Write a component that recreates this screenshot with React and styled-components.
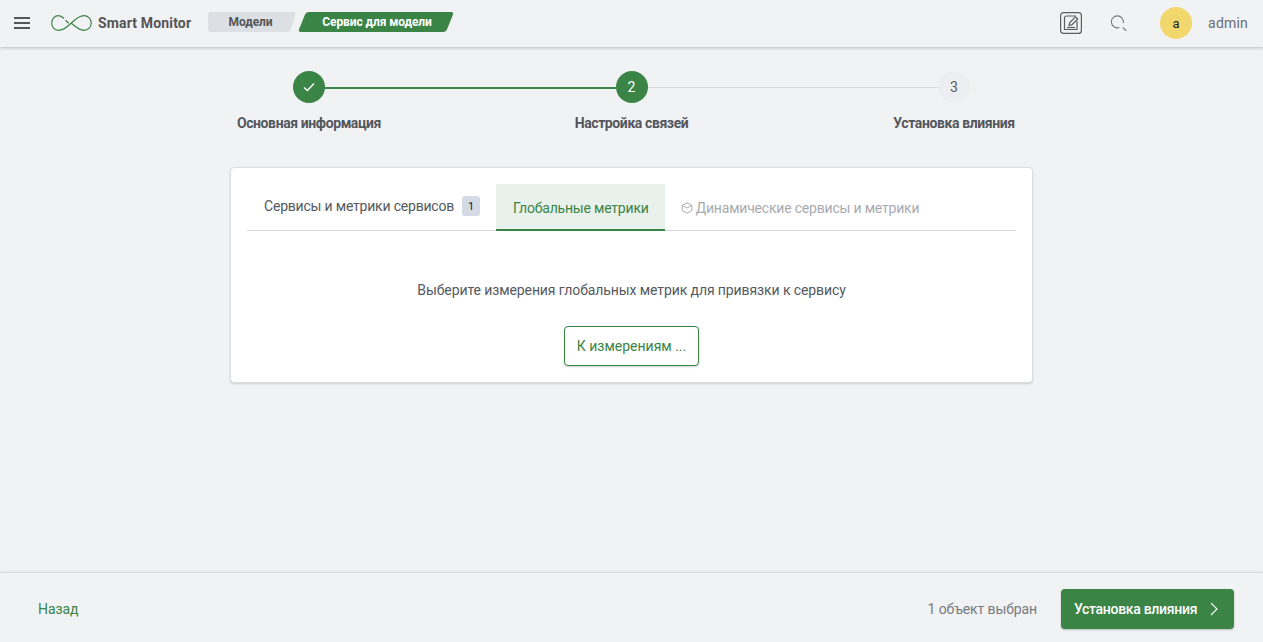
import React from "react";
import styled, { createGlobalStyle } from "styled-components";

const green = "#3a8445";
const FONT = `"Roboto", "Liberation Sans", sans-serif`;

const Global = createGlobalStyle`
  html, body {
    margin: 0;
    height: 100%;
    background: #f1f2f4;
    font-family: ${FONT};
    font-size: 14px;
  }
  * { box-sizing: border-box; }
`;

const Page = styled.div`
  height: 642px;
  display: flex;
  flex-direction: column;
  overflow: hidden;
`;

const Header = styled.header`
  height: 47px;
  flex: none;
  display: flex;
  align-items: center;
  padding: 0 15px 1px 14px;
  background: #f1f2f4;
  box-shadow: 0 1px 3px rgba(60, 64, 75, 0.3);
`;

const Burger = styled.div`
  width: 16px;
  height: 12px;
  margin-right: 21px;
  border-top: 2px solid #555;
  border-bottom: 2px solid #555;
  position: relative;

  &::after {
    content: "";
    position: absolute;
    left: 0;
    right: 0;
    top: 3px;
    height: 2px;
    background: #555;
  }
`;

const Brand = styled.div`
  margin: 0 17px 0 6px;
  width: 93px;
  white-space: nowrap;
  font-size: 14px;
  font-weight: 700;
  letter-spacing: 0.15px;
  color: #555;
`;

const Crumb = styled.div`
  position: relative;
  z-index: 0;
  height: 20px;
  display: flex;
  align-items: center;
  justify-content: center;
  margin-top: -2px;
  padding: ${(p) => (p.$active ? "0 0 0 2px" : "0 3px 0 0")};
  width: ${(p) => p.$width}px;
  font-size: 12px;
  font-weight: 700;
  letter-spacing: -0.1px;
  color: ${(p) => (p.$active ? "#fff" : "#555")};

  &::before {
    content: "";
    position: absolute;
    z-index: -1;
    inset: 0;
    left: ${(p) => (p.$active ? "4px" : "10px")};
    right: ${(p) => (p.$active ? "4px" : "3px")};
    border-radius: 3px;
    background: ${(p) => (p.$active ? green : "#dcdfe4")};
    transform: skewX(${(p) => (p.$active ? "-22deg" : "-17deg")});
  }

  &::after {
    content: "";
    display: ${(p) => (p.$active ? "none" : "block")};
    position: absolute;
    z-index: -1;
    top: 0;
    bottom: 0;
    left: 0;
    width: 20px;
    border-radius: 3px;
    background: #dcdfe4;
  }
`;

const CrumbGap = styled.div`
  width: 2px;
`;

const Spacer = styled.div`
  flex: 1;
`;

const ToolIcon = styled.svg`
  display: block;
  flex: none;
  margin-right: ${(p) => p.$gap}px;
`;

const Avatar = styled.div`
  width: 32px;
  height: 32px;
  border-radius: 50%;
  background: #f2d76d;
  color: #222;
  font-size: 13px;
  display: flex;
  align-items: center;
  justify-content: center;
  margin-right: 16px;
`;

const UserName = styled.div`
  font-size: 14px;
  letter-spacing: 0.2px;
  color: #6a6d73;
`;

const Main = styled.main`
  flex: 1;
  display: flex;
  flex-direction: column;
  align-items: center;
  padding-top: 24px;
`;

const Stepper = styled.div`
  width: 677px;
  display: grid;
  grid-template-columns: 32px 1fr 32px 1fr 32px;
  grid-template-rows: 32px auto;
  align-items: center;
`;

const Circle = styled.div`
  width: 32px;
  height: 32px;
  border-radius: 50%;
  display: flex;
  align-items: center;
  justify-content: center;
  font-size: 14px;
  background: ${(p) => (p.$on ? green : "#eceef1")};
  color: ${(p) => (p.$on ? "#fff" : "#555b66")};
`;

const Line = styled.div`
  height: ${(p) => (p.$on ? 2 : 1)}px;
  margin-top: ${(p) => (p.$on ? 2 : 0)}px;
  background: ${(p) => (p.$on ? green : "#d6d8dc")};
`;

const StepLabel = styled.div`
  grid-row: 2;
  grid-column: ${(p) => p.$col};
  justify-self: center;
  margin-top: 11px;
  white-space: nowrap;
  font-size: 14px;
  line-height: 18px;
  font-weight: 700;
  letter-spacing: -0.4px;
  color: #53565c;
`;

const Card = styled.section`
  width: 803px;
  height: 216px;
  margin-top: 35px;
  padding: 16px 16px 0;
  background: #fff;
  border: 1px solid #dcdee2;
  border-radius: 4px;
  box-shadow: 0 1px 2px rgba(60, 64, 75, 0.2);
  display: flex;
  flex-direction: column;
  align-items: center;
`;

const Tabs = styled.div`
  align-self: stretch;
  height: 47px;
  display: flex;
  border-bottom: 1px solid #d6d8dc;
`;

const Tab = styled.div`
  height: 47px;
  display: flex;
  align-items: center;
  gap: ${(p) => (p.$gap ? p.$gap : 0)}px;
  padding: ${(p) => (p.$active ? 3 : p.$disabled ? 1 : 0)}px 16px
    ${(p) => (p.$active || p.$disabled ? 0 : 3)}px ${(p) => (p.$disabled ? 16 : 17)}px;
  font-size: 14px;
  letter-spacing: -0.2px;
  color: ${(p) => (p.$active ? green : p.$disabled ? "#a9abaf" : "#555960")};
  background: ${(p) => (p.$active ? "#e9f1ec" : "transparent")};
  border-bottom: ${(p) => (p.$active ? `2px solid ${green}` : "none")};
`;

const Count = styled.span`
  width: 18px;
  height: 20px;
  border-radius: 3px;
  background: #d5dbe5;
  color: #222;
  font-size: 11px;
  display: flex;
  align-items: center;
  justify-content: center;
`;

const Hint = styled.p`
  margin: 50px 0 0;
  font-size: 14px;
  line-height: 18px;
  letter-spacing: -0.1px;
  color: #555960;
`;

const GhostButton = styled.button`
  width: 135px;
  height: 40px;
  margin-top: 27px;
  padding: 0;
  font: inherit;
  font-size: 14px;
  color: ${green};
  background: #fff;
  border: 1px solid ${green};
  border-radius: 4px;
  box-shadow: 0 1px 2px rgba(60, 64, 75, 0.25);
`;

const Footer = styled.footer`
  height: 70px;
  flex: none;
  display: flex;
  align-items: center;
  padding: 3px 29px 0 38px;
  border-top: 1px solid #d9dbdf;
  box-shadow: 0 -1px 2px rgba(60, 64, 75, 0.06);
`;

const BackLink = styled.a`
  font-size: 14px;
  letter-spacing: -0.1px;
  color: ${green};
`;

const Selected = styled.div`
  margin-right: 24px;
  font-size: 14px;
  letter-spacing: -0.1px;
  color: #777a80;
`;

const NextButton = styled.button`
  width: 173px;
  height: 40px;
  display: flex;
  align-items: center;
  justify-content: space-between;
  padding: 0 16px 0 13px;
  font: inherit;
  font-size: 14px;
  font-weight: 500;
  letter-spacing: -0.3px;
  color: #fff;
  background: ${green};
  border: none;
  border-radius: 4px;
  box-shadow: 0 1px 2px rgba(60, 64, 75, 0.3);
`;

function Logo() {
  return (
    <svg width="41" height="16" viewBox="0 0 41 16" fill="none" stroke={green} strokeWidth="1.2">
      <path d="M13 3.500C11.500 2 10 .7 7.500 .7 3.500 .7 .7 4 .7 8s2.800 7.300 6.800 7.300C13 15.300 17 11 20 8.300c4-3.800 8-7.600 13-7.600 4 0 7.300 3.300 7.300 7.300s-3.300 7.300-7.300 7.300c-5 0-9-4-12.500-7" />
      <path d="M14.500 5.200l3.300 3" />
    </svg>
  );
}

function EditIcon() {
  return (
    <ToolIcon $gap={29} width="22" height="22" viewBox="0 0 22 22" fill="none" stroke="#5b5e63" strokeWidth="1.2">
      <rect x="0.6" y="0.6" width="20.8" height="20.8" rx="3" />
      <path d="M16 4H6.500A2 2 0 0 0 4.500 6v11.500H17V9" />
      <path d="M9 13.500l.8-3L15.500 4.800 17.700 7 12 12.700z" />
      <path d="M7 15.500h8" />
    </ToolIcon>
  );
}

function SearchIcon() {
  return (
    <ToolIcon $gap={33} width="16" height="16" viewBox="0 0 16 16" fill="none" stroke="#77797e" strokeWidth="1.1">
      <path d="M8.500 12.500A6 6 0 1 1 12.300 8" />
      <path d="M11.800 12.500l3.500 3.300" />
    </ToolIcon>
  );
}

function CubeIcon() {
  return (
    <svg width="12" height="12" viewBox="0 0 12 12" fill="none" stroke="#a9abaf" strokeWidth="1">
      <path d="M6 .8l4.800 2.600v5.200L6 11.200 1.200 8.600V3.400z" />
      <path d="M1.200 3.400L6 6l4.800-2.600" />
    </svg>
  );
}

function Check() {
  return (
    <svg width="14" height="14" viewBox="0 0 14 14" fill="none" stroke="#fff" strokeWidth="1.4">
      <path d="M2 7.500l3.500 3L12 3.500" />
    </svg>
  );
}

function Chevron() {
  return (
    <svg width="8" height="14" viewBox="0 0 8 14" fill="none" stroke="#fff" strokeWidth="1.1">
      <path d="M1 1l6 6-6 6" />
    </svg>
  );
}

export default function App() {
  return (
    <>
      <Global />
      <Page>
        <Header>
          <Burger />
          <Logo />
          <Brand>Smart Monitor</Brand>
          <Crumb $width={88}>Модели</Crumb>
          <CrumbGap />
          <Crumb $width={156} $active>Сервис для модели</Crumb>
          <Spacer />
          <EditIcon />
          <SearchIcon />
          <Avatar>a</Avatar>
          <UserName>admin</UserName>
        </Header>
        <Main>
          <Stepper>
            <Circle $on><Check /></Circle>
            <Line $on />
            <Circle $on>2</Circle>
            <Line />
            <Circle>3</Circle>
            <StepLabel $col={1}>Основная информация</StepLabel>
            <StepLabel $col={3}>Настройка связей</StepLabel>
            <StepLabel $col={5}>Установка влияния</StepLabel>
          </Stepper>
          <Card>
            <Tabs>
              <Tab $gap={8}>Сервисы и метрики сервисов<Count>1</Count></Tab>
              <Tab $active>Глобальные метрики</Tab>
              <Tab $disabled $gap={3}><CubeIcon />Динамические сервисы и метрики</Tab>
            </Tabs>
            <Hint>Выберите измерения глобальных метрик для привязки к сервису</Hint>
            <GhostButton>К измерениям ...</GhostButton>
          </Card>
        </Main>
        <Footer>
          <BackLink>Назад</BackLink>
          <Spacer />
          <Selected>1 объект выбран</Selected>
          <NextButton>Установка влияния<Chevron /></NextButton>
        </Footer>
      </Page>
    </>
  );
}
